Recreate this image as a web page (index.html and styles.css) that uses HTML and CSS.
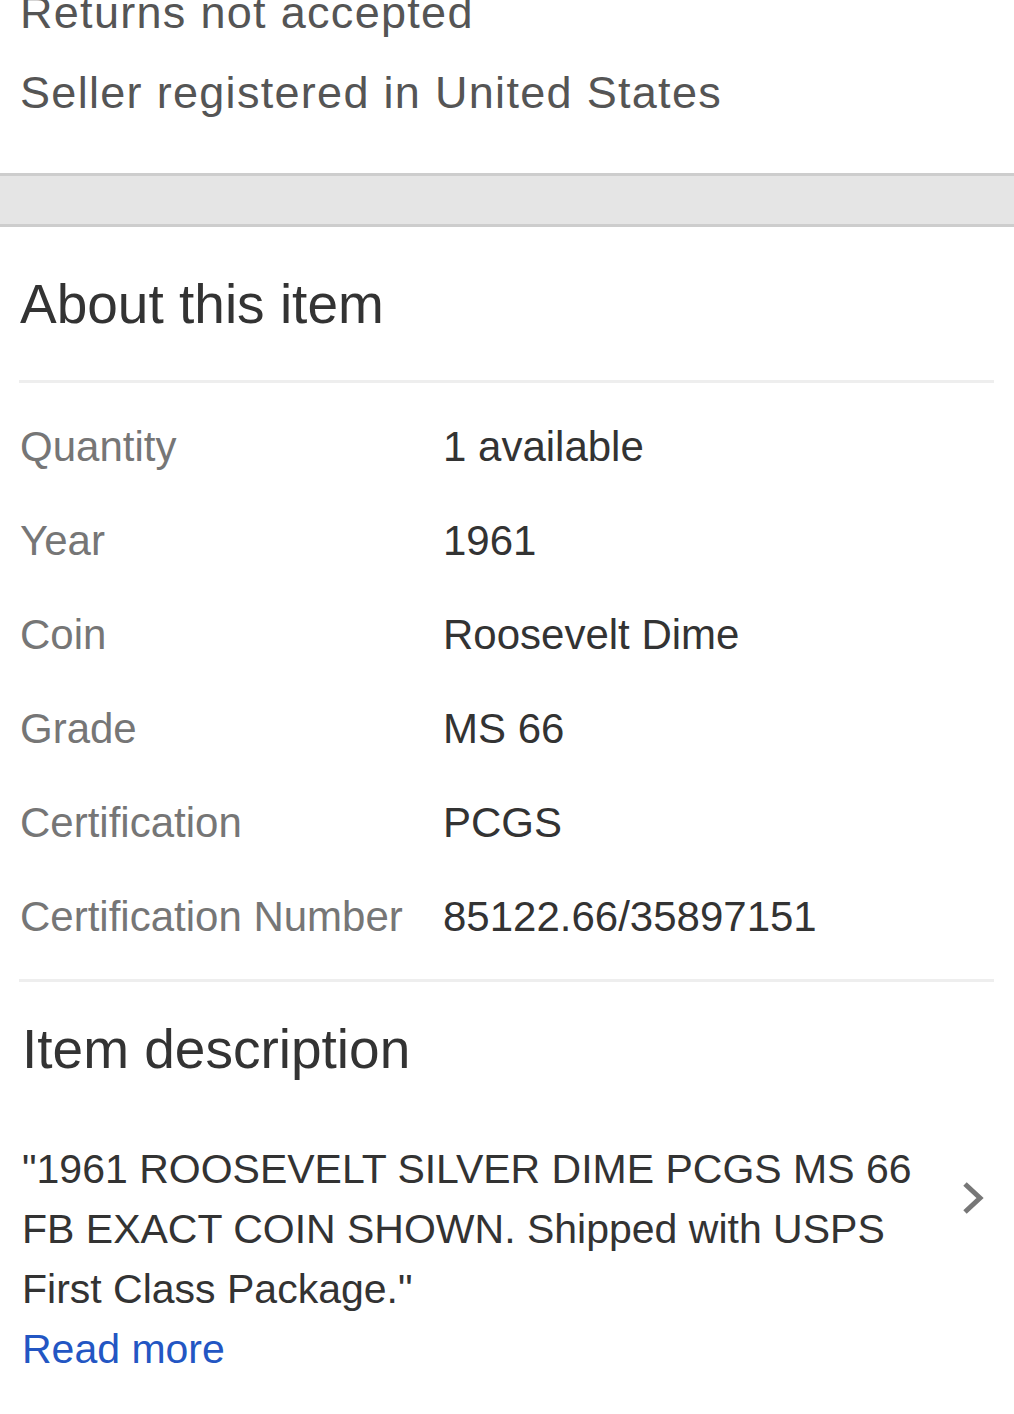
FILE: index.html
```html
<!DOCTYPE html>
<html lang="en">

<head>
    <meta charset="UTF-8">
    <meta name="viewport" content="width=device-width, initial-scale=1.0">
    <title>About this item</title>
    <link rel="stylesheet" href="styles.css">
</head>

<body>
    <div class="policy">
        <p>Returns not accepted</p>
        <p>Seller registered in United States</p>
    </div>

    <div class="band"></div>

    <div class="about">
        <h2>About this item</h2>
        <div class="specs">
            <div class="label">Quantity</div>
            <div class="value">1 available</div>
            <div class="label">Year</div>
            <div class="value">1961</div>
            <div class="label">Coin</div>
            <div class="value">Roosevelt Dime</div>
            <div class="label">Grade</div>
            <div class="value">MS 66</div>
            <div class="label">Certification</div>
            <div class="value">PCGS</div>
            <div class="label">Certification Number</div>
            <div class="value">85122.66/35897151</div>
        </div>
    </div>

    <div class="desc">
        <h2>Item description</h2>
        <div class="desc-row">
            <div class="desc-text">
                <p>"1961 ROOSEVELT SILVER DIME PCGS MS 66 FB EXACT COIN SHOWN. Shipped with USPS First Class Package."</p>
                <a href="#" class="more">Read more</a>
            </div>
            <svg class="chev" width="24" height="34" viewBox="0 0 24 34">
                <polyline points="4,3 19,17 4,31" fill="none" stroke="#777" stroke-width="5" />
            </svg>
        </div>
    </div>
</body>

</html>
```

FILE: styles.css
```css
body {
    margin: 0;
    background: #fff;
    font-family: "Liberation Sans", Arial, sans-serif;
    color: #333;
}

p {
    margin: 0;
}

.policy {
    margin-top: -27px;
    padding: 0 20px 40px;
    font-size: 45px;
    line-height: 80px;
    letter-spacing: 1.3px;
    color: #555;
}

.band {
    height: 48px;
    background: #e5e5e5;
    border-top: 3px solid #cdcdcd;
    border-bottom: 3px solid #cdcdcd;
}

h2 {
    margin: 0;
    font-size: 55px;
    font-weight: normal;
    line-height: 66px;
    color: #333;
}

.about {
    padding: 44px 20px 0 19px;
}

.about h2 {
    margin-bottom: 43px;
    padding-left: 1px;
}

.specs {
    display: grid;
    grid-template-columns: 424px 1fr;
    padding: 17px 0 15px;
    border-top: 3px solid #eee;
    border-bottom: 3px solid #eee;
    font-size: 42px;
    line-height: 50px;
}

.label,
.value {
    padding: 22px 0;
}

.label {
    padding-left: 1px;
    color: #767676;
}

.value {
    color: #333;
}

.desc {
    padding: 34px 29px 40px 22px;
}

.desc-row {
    display: flex;
    align-items: flex-start;
    margin-top: 57px;
}

.desc-text {
    flex: 1;
    padding-right: 14px;
    font-size: 41px;
    line-height: 60px;
    color: #333;
}

.more {
    display: block;
    color: #2356c3;
    text-decoration: none;
}

.chev {
    margin-top: 42px;
}
```
